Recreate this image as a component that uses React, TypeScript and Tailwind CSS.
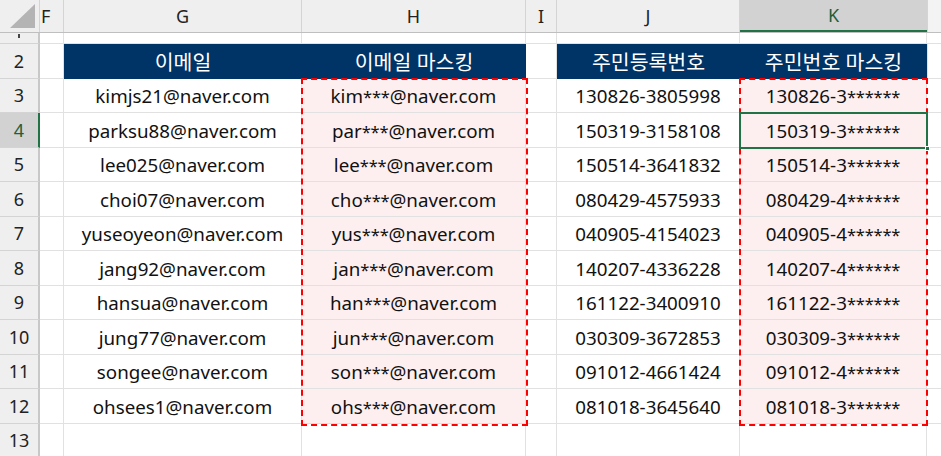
import React from "react"

const rows = [
  ["kimjs21@naver.com", "kim***@naver.com", "130826-3805998", "130826-3******"],
  ["parksu88@naver.com", "par***@naver.com", "150319-3158108", "150319-3******"],
  ["lee025@naver.com", "lee***@naver.com", "150514-3641832", "150514-3******"],
  ["choi07@naver.com", "cho***@naver.com", "080429-4575933", "080429-4******"],
  ["yuseoyeon@naver.com", "yus***@naver.com", "040905-4154023", "040905-4******"],
  ["jang92@naver.com", "jan***@naver.com", "140207-4336228", "140207-4******"],
  ["hansua@naver.com", "han***@naver.com", "161122-3400910", "161122-3******"],
  ["jung77@naver.com", "jun***@naver.com", "030309-3672853", "030309-3******"],
  ["songee@naver.com", "son***@naver.com", "091012-4661424", "091012-4******"],
  ["ohsees1@naver.com", "ohs***@naver.com", "081018-3645640", "081018-3******"],
]

const cell = "h-full flex items-center justify-center pt-[2px] border-r border-b border-[#e1e1e1] shrink-0"
const head = "h-full shrink-0 flex items-center justify-center pt-[3px] bg-[#003366] text-white text-[20.5px]"

// masked text: asterisks drawn a little smaller, as in the sheet's font
function Masked({ text }: { text: string }) {
  const parts = text.split(/(\*+)/)
  return (
    <span className="whitespace-pre">
      {parts.map((p, i) =>
        p.startsWith("*") ? (
          <span key={i} className="text-[16.5px] tracking-[-0.2px]">{p}</span>
        ) : (
          <span key={i}>{p}</span>
        )
      )}
    </span>
  )
}

function RowHead({ n, active }: { n: number | string; active?: boolean }) {
  return (
    <div
      className={
        "w-[40px] h-full shrink-0 flex items-center justify-center pt-[1px] border-b border-[#d4d4d4] border-r-2 text-[18px] " +
        (active ? "bg-[#d2d2d2] border-r-[#217346] text-[#215f3a]" : "bg-[#efefef] border-r-[#c8c8c8] text-[#222]")
      }
    >
      {n}
    </div>
  )
}

export default function App() {
  return (
    <div
      className="relative w-[941px] h-[456px] overflow-hidden bg-white text-[18.75px] text-[#111]"
      style={{ fontFamily: '"Noto Sans", "Noto Sans CJK KR", sans-serif' }}
    >
      {/* column headers */}
      <div className="flex h-[33px] bg-[#efefef] border-b border-[#bfbfbf] text-[#222] text-[18px]">
        <div className="w-[40px] h-full shrink-0 flex items-end justify-end pr-[3px] pb-[4px] border-r border-[#d4d4d4]">
          <svg width="26" height="24" viewBox="0 0 26 24">
            <polygon points="25,0 25,24 0,24" fill="#b4b4b4" />
          </svg>
        </div>
        <div className="w-[24px] h-full shrink-0 flex items-center justify-start pl-[1px] border-r border-[#d4d4d4]">F</div>
        <div className="w-[238px] h-full shrink-0 flex items-center justify-center border-r border-[#d4d4d4]">G</div>
        <div className="w-[224px] h-full shrink-0 flex items-center justify-center border-r border-[#d4d4d4]">H</div>
        <div className="w-[31px] h-full shrink-0 flex items-center justify-center border-r border-[#d4d4d4]">I</div>
        <div className="w-[183px] h-full shrink-0 flex items-center justify-center border-r border-[#d4d4d4]">J</div>
        <div className="w-[187px] h-full shrink-0 flex items-center justify-center bg-[#d2d2d2] border-b-2 border-[#217346] text-[#215f3a]">K</div>
        <div className="flex-1 h-full border-l border-[#d4d4d4] bg-[#f3f3f3]" />
      </div>

      {/* row 1 (scrolled, partial) */}
      <div className="flex h-[11px] overflow-hidden">
        <div className="w-[40px] h-full shrink-0 bg-[#efefef] border-r-2 border-[#c8c8c8] border-b border-b-[#d4d4d4] flex justify-center">
          <div className="w-[2px] h-[4px] bg-[#444] mt-[1px]" />
        </div>
        <div className={cell + " w-[24px]"} />
        <div className={cell + " w-[238px]"} />
        <div className={cell + " w-[224px]"} />
        <div className={cell + " w-[31px]"} />
        <div className={cell + " w-[183px]"} />
        <div className={cell + " w-[187px]"} />
        <div className="flex-1 h-full border-b border-[#e1e1e1]" />
      </div>

      {/* row 2 headers */}
      <div className="flex h-[34.5px]">
        <RowHead n={2} />
        <div className={cell + " w-[24px]"} />
        <div className={head + " w-[238px]"}>이메일</div>
        <div className={head + " w-[224px]"}>이메일 마스킹</div>
        <div className={cell + " w-[31px]"} />
        <div className={head + " w-[183px]"}>주민등록번호</div>
        <div className={head + " w-[187px]"}>주민번호 마스킹</div>
        <div className="flex-1 h-full border-b border-l border-[#e1e1e1]" />
      </div>

      {rows.map((r, i) => (
        <div key={i} className="flex h-[34.5px]">
          <RowHead n={i + 3} active={i === 1} />
          <div className={cell + " w-[24px]"} />
          <div className={cell + " w-[238px]"}>{r[0]}</div>
          <div className={cell + " w-[224px] bg-[#fdefef]"}><Masked text={r[1]} /></div>
          <div className={cell + " w-[31px]"} />
          <div className={cell + " w-[183px]"}>{r[2]}</div>
          <div className={cell + " w-[187px] bg-[#fdefef]"}><Masked text={r[3]} /></div>
          <div className="flex-1 h-full border-b border-[#e1e1e1]" />
        </div>
      ))}

      <div className="flex h-[34.5px]">
        <RowHead n={13} />
        <div className={cell + " w-[24px]"} />
        <div className={cell + " w-[238px]"} />
        <div className={cell + " w-[224px]"} />
        <div className={cell + " w-[31px]"} />
        <div className={cell + " w-[183px]"} />
        <div className={cell + " w-[187px]"} />
        <div className="flex-1 h-full border-b border-[#e1e1e1]" />
      </div>

      {/* dashed outlines over masked ranges */}
      <div className="absolute left-[301px] top-[78px] w-[227px] h-[348px] border-2 border-dashed border-[#ff0000] pointer-events-none" />
      <div className="absolute left-[739px] top-[78px] w-[189px] h-[348px] border-2 border-dashed border-[#ff0000] pointer-events-none" />

      {/* active cell K4 */}
      <div className="absolute left-[739px] top-[112px] w-[189px] h-[37px] border-2 border-[#217346] pointer-events-none" />
      <div className="absolute left-[925px] top-[146px] w-[5px] h-[5px] bg-[#217346] border border-white pointer-events-none" />
    </div>
  )
}
